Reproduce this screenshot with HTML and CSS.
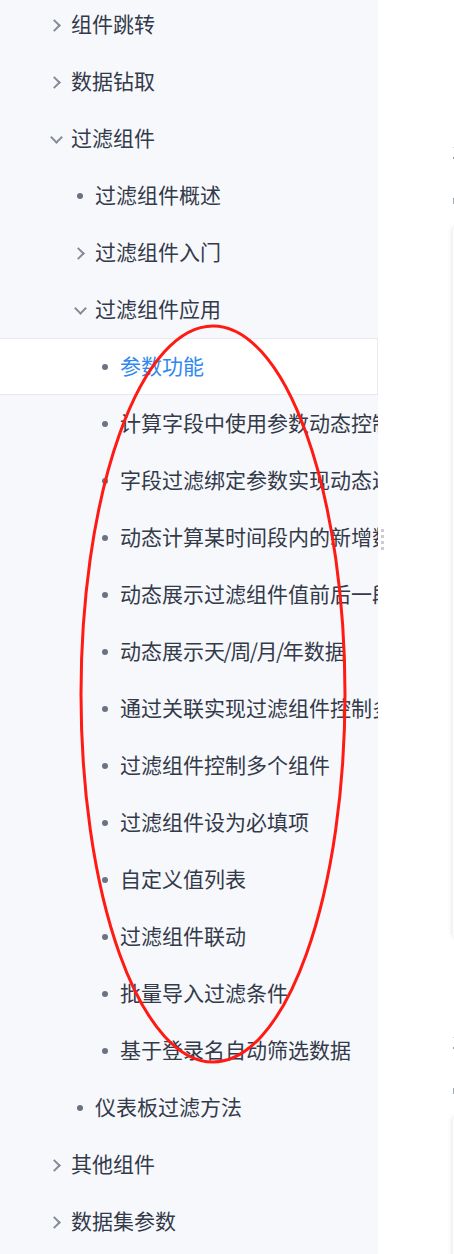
FILE: index.html
```html
<!DOCTYPE html>
<html lang="zh-CN">
<head>
  <meta charset="UTF-8" />
  <meta name="viewport" content="width=device-width, initial-scale=1.0"/>
  <title>过滤组件 - 文档目录</title>
  <link rel="stylesheet" href="styles.css">
</head>
<body>
  <div class="page">
    <nav class="sidebar">
      <ul class="tree">
        <li class="node lv1"><span class="icon chev-right"></span><span class="label">组件跳转</span></li>
        <li class="node lv1"><span class="icon chev-right"></span><span class="label">数据钻取</span></li>
        <li class="node lv1"><span class="icon chev-down"></span><span class="label">过滤组件</span></li>
        <li class="node lv2"><span class="icon dot"></span><span class="label">过滤组件概述</span></li>
        <li class="node lv2"><span class="icon chev-right"></span><span class="label">过滤组件入门</span></li>
        <li class="node lv2"><span class="icon chev-down"></span><span class="label">过滤组件应用</span></li>
        <li class="node lv3 active"><span class="icon dot"></span><span class="label">参数功能</span></li>
        <li class="node lv3"><span class="icon dot"></span><span class="label">计算字段中使用参数动态控制计算逻辑</span></li>
        <li class="node lv3"><span class="icon dot"></span><span class="label">字段过滤绑定参数实现动态过滤</span></li>
        <li class="node lv3"><span class="icon dot"></span><span class="label">动态计算某时间段内的新增数据</span></li>
        <li class="node lv3"><span class="icon dot"></span><span class="label">动态展示过滤组件值前后一段时间的数据</span></li>
        <li class="node lv3"><span class="icon dot"></span><span class="label">动态展示天<span class="sep">/</span>周<span class="sep">/</span>月<span class="sep">/</span>年数据</span></li>
        <li class="node lv3"><span class="icon dot"></span><span class="label">通过关联实现过滤组件控制多个数据集</span></li>
        <li class="node lv3"><span class="icon dot"></span><span class="label">过滤组件控制多个组件</span></li>
        <li class="node lv3"><span class="icon dot"></span><span class="label">过滤组件设为必填项</span></li>
        <li class="node lv3"><span class="icon dot"></span><span class="label">自定义值列表</span></li>
        <li class="node lv3"><span class="icon dot"></span><span class="label">过滤组件联动</span></li>
        <li class="node lv3"><span class="icon dot"></span><span class="label">批量导入过滤条件</span></li>
        <li class="node lv3"><span class="icon dot"></span><span class="label">基于登录名自动筛选数据</span></li>
        <li class="node lv2"><span class="icon dot"></span><span class="label">仪表板过滤方法</span></li>
        <li class="node lv1"><span class="icon chev-right"></span><span class="label">其他组件</span></li>
        <li class="node lv1"><span class="icon chev-right"></span><span class="label">数据集参数</span></li>
      </ul>
    </nav>

    <div class="resizer">
      <span class="grip"></span>
      <span class="grip"></span>
      <span class="grip"></span>
      <span class="grip"></span>
    </div>

    <main class="content">
      <section class="doc-block first">
        <span class="tick faint"></span>
        <span class="tick"></span>
        <span class="tick bar"></span>
        <div class="doc-card"></div>
      </section>
      <section class="doc-block">
        <span class="tick faint"></span>
        <span class="tick"></span>
        <span class="tick bar"></span>
        <div class="doc-card"></div>
      </section>
    </main>
  </div>

  <!-- annotation drawn over the screenshot -->
  <svg class="markup" width="454" height="1254" viewBox="0 0 454 1254">
    <ellipse cx="213" cy="694" rx="132" ry="368" fill="none" stroke="#ff1a14" stroke-width="3"/>
  </svg>
</body>
</html>
```

FILE: styles.css
```css
* {
  box-sizing: border-box;
}
body {
  margin: 0;
  font-family: "Noto Sans CJK SC", "Noto Sans", sans-serif;
  background: #fff;
  overflow: hidden;
}
.page {
  display: flex;
  height: 1254px;
  overflow: hidden;
}
.sidebar {
  width: 378px;
  flex: none;
  background: #f7f8fc;
  overflow: hidden;
}
.tree {
  list-style: none;
  margin: -4px 0 0;
  padding: 0;
}
.node {
  height: 57px;
  display: flex;
  align-items: center;
  gap: 7px;
  font-size: 21px;
  color: #333a49;
  white-space: nowrap;
}
.node .label {
  line-height: 1;
  margin-top: -2px;
}
.lv1 {
  padding-left: 48px;
}
.lv2 {
  padding-left: 72px;
}
.lv3 {
  padding-left: 97px;
}
.node.active {
  background: #fff;
  border-top: 1px solid #e7e9ee;
  border-bottom: 1px solid #e7e9ee;
  border-right: 1px solid #e7e9ee;
  color: #2f88f0;
}
.sep {
  margin: 0 -1.5px;
}
.icon {
  width: 16px;
  height: 16px;
  flex: none;
  position: relative;
}
.dot::after {
  content: "";
  position: absolute;
  left: 5px;
  top: 5px;
  width: 6px;
  height: 6px;
  border-radius: 50%;
  background: #6b7383;
}
.chev-right::after,
.chev-down::after {
  content: "";
  position: absolute;
  width: 7px;
  height: 7px;
  border-right: 2px solid #858b97;
  border-bottom: 2px solid #858b97;
}
.chev-right::after {
  left: 2px;
  top: 4px;
  transform: rotate(-45deg);
}
.chev-down::after {
  left: 4px;
  top: 2px;
  transform: rotate(45deg);
}
.resizer {
  width: 12px;
  flex: none;
  display: flex;
  flex-direction: column;
  gap: 3px;
  padding: 529px 0 0 3px;
}
.grip {
  width: 3px;
  height: 3px;
  background: #c9ced6;
}
.content {
  flex: 1;
  padding-left: 63px;
  overflow: hidden;
}
.doc-block {
  padding-top: 100px;
}
.doc-block.first {
  padding-top: 147px;
}
.tick {
  display: block;
  width: 1px;
  height: 1px;
  background: #d4d7dc;
}
.tick + .tick {
  margin-top: 9px;
  height: 2px;
  background: #9aa0a8;
}
.tick.bar {
  margin-top: 39px;
  width: 2px;
  height: 6px;
  background: #a6abb3;
}
.doc-card {
  margin-top: 23px;
  width: 600px;
  height: 710px;
  background: #fff;
  border-radius: 4px;
  box-shadow: 0 0 6px rgba(0, 0, 0, 0.14);
}
.markup {
  position: absolute;
  left: 0;
  top: 0;
  pointer-events: none;
}
```
